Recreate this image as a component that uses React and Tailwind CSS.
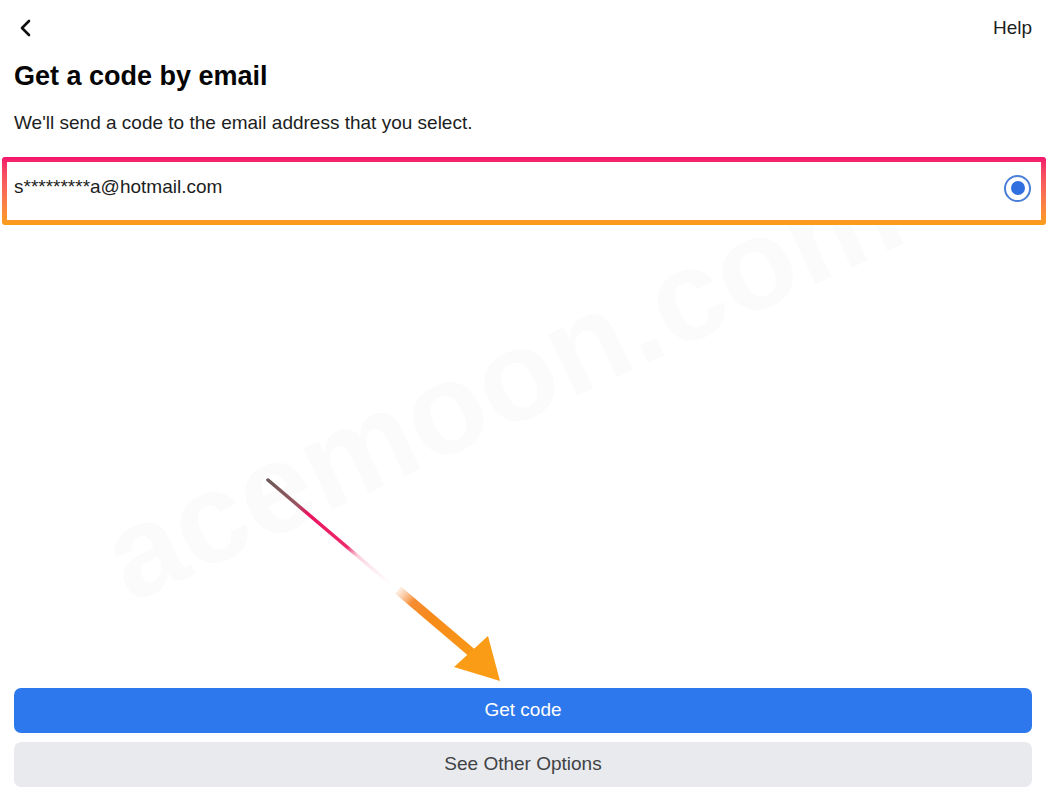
import React from "react";

export default function App() {
  return (
    <div
      className="relative w-[1048px] h-[800px] bg-white overflow-hidden flex flex-col"
      style={{ fontFamily: '"Liberation Sans", Arial, sans-serif' }}
    >
      {/* watermark */}
      <div className="absolute left-[112px] top-[500px] pointer-events-none select-none" aria-hidden="true">
        <span className="block text-[128px] font-bold text-[#fbfbfb] leading-none origin-left -rotate-[25deg]">
          acemoon.com
        </span>
      </div>

      {/* header */}
      <div className="relative flex items-center justify-between h-[56px] pl-[18px] pr-[16px]">
        <svg width="16" height="20" viewBox="0 0 16 20" className="-mt-[1px]">
          <path d="M11 3 L4 10 L11 17" fill="none" stroke="#111" strokeWidth="2.6" strokeLinecap="round" strokeLinejoin="round" />
        </svg>
        <span className="text-[19px] text-[#1c1e21]">Help</span>
      </div>

      <h1 className="relative px-[14px] mt-[4px] text-[27px] leading-[32px] font-bold text-[#050505]">Get a code by email</h1>
      <p className="relative px-[14px] mt-[19px] text-[19px] leading-[24px] text-[#1c1e21]">
        We'll send a code to the email address that you select.
      </p>

      {/* highlighted option */}
      <div className="relative mx-[2px] mt-[22px] p-[5px] rounded-[3px] bg-gradient-to-b from-[#f4106c] to-[#fb9e14]">
        <div className="bg-white h-[58px] flex items-center justify-between pl-[7px] pr-[10px]">
          <span className="text-[19px] leading-[24px] text-[#1c1e21] -mt-[9px]">s*********a@hotmail.com</span>
          <span className="w-[27px] h-[27px] rounded-full border-[2.5px] border-[#4a7fd8] flex items-center justify-center -mt-[6px]">
            <span className="w-[14px] h-[14px] rounded-full bg-[#2f6fe0]" />
          </span>
        </div>
      </div>

      <div className="flex-1" />

      {/* buttons */}
      <div className="relative px-[14px] pr-[16px] pb-[13px] flex flex-col gap-[9px]">
        <button className="h-[45px] w-full rounded-[7px] bg-[#2d78ec] text-white text-[19px]">Get code</button>
        <button className="h-[45px] w-full rounded-[7px] bg-[#e9eaee] text-[#404244] text-[19px]">See Other Options</button>
      </div>

      {/* arrow */}
      <svg
        className="absolute left-0 top-0 pointer-events-none"
        width="1048"
        height="800"
        viewBox="0 0 1048 800"
      >
        <defs>
          <linearGradient id="thin" x1="268" y1="480" x2="400" y2="592" gradientUnits="userSpaceOnUse">
            <stop offset="0" stopColor="#6b5a58" />
            <stop offset="0.22" stopColor="#9a5560" />
            <stop offset="0.3" stopColor="#e8135f" />
            <stop offset="0.6" stopColor="#ee2a6c" />
            <stop offset="0.68" stopColor="#f6a0b8" stopOpacity="0.5" />
            <stop offset="1" stopColor="#ffffff" stopOpacity="0" />
          </linearGradient>
          <linearGradient id="thick" x1="395" y1="588" x2="480" y2="660" gradientUnits="userSpaceOnUse">
            <stop offset="0" stopColor="#f7a060" stopOpacity="0" />
            <stop offset="0.2" stopColor="#f5801e" stopOpacity="0.9" />
            <stop offset="0.4" stopColor="#f68a1a" />
            <stop offset="1" stopColor="#f99a16" />
          </linearGradient>
        </defs>
        <line x1="268" y1="480" x2="400" y2="592" stroke="url(#thin)" strokeWidth="3.5" strokeLinecap="round" />
        <line x1="398" y1="590" x2="478" y2="658" stroke="url(#thick)" strokeWidth="9" />
        <polygon points="500,681 454,667 488,636" fill="#fa9c16" />
      </svg>
    </div>
  );
}
